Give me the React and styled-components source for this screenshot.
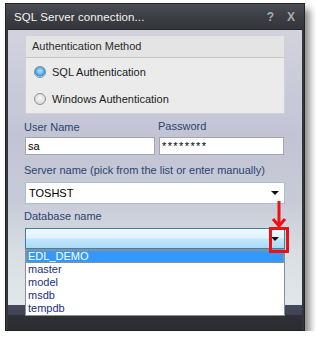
import styled, { createGlobalStyle } from 'styled-components';

const GlobalStyle = createGlobalStyle`
  html, body {
    margin: 0;
    padding: 0;
    background: #ffffff;
  }
  body {
    font-family: "Liberation Sans", Arial, sans-serif;
  }
`;

const Window = styled.div`
  position: relative;
  box-sizing: border-box;
  width: 300px;
  height: 328px;
  margin: 3px 0 0 5px;
  display: flex;
  flex-direction: column;
  background: #34363c;
  border: 1px solid #222327;
  box-shadow: 5px 6px 7px rgba(0, 0, 0, 0.45);
`;

const TitleBar = styled.div`
  height: 25px;
  display: flex;
  align-items: center;
  padding: 0 9px 0 8px;
  background: linear-gradient(180deg, #4a4d53 0%, #3b3e43 50%, #34363b 100%);
`;

const Title = styled.div`
  flex: 1;
  color: #f4f4f4;
  font-size: 11.5px;
  letter-spacing: 0.1px;
`;

const TitleButton = styled.span`
  color: #a9abb0;
  font-size: 12px;
  font-weight: bold;
  margin-left: ${p => p.gap}px;
`;

const Content = styled.div`
  flex: 1;
  margin: 0 2px;
  padding: 5px 17px 0;
  border-top: 1px solid #24262a;
  display: flex;
  flex-direction: column;
  background: linear-gradient(180deg, #d2d3dd 0%, #c6c7d7 30%, #c2c3d4 38%, #c8cbd7 62%, #d9dfe3 82%, #e1e7e9 100%);
`;

const Group = styled.div`
  border: 1px solid #d0d0d6;
  background: #ebebeb;
`;

const GroupHeader = styled.div`
  height: 21px;
  line-height: 21px;
  padding-left: 6px;
  font-size: 11px;
  color: #2c2c2c;
  background: #e4e4e4;
  border-bottom: 1px solid #c6c6c6;
`;

const GroupBody = styled.div`
  display: flex;
  flex-direction: column;
  padding-bottom: 1px;
`;

const RadioRow = styled.label`
  height: 27px;
  display: flex;
  align-items: center;
  padding-left: 8px;
  font-size: 11px;
  color: #1b1b1b;
`;

const RadioDot = styled.span`
  box-sizing: border-box;
  width: 12px;
  height: 12px;
  border-radius: 50%;
  margin-right: 6px;
  border: 1px solid ${p => (p.checked ? '#7d8c9c' : '#8f8f8f')};
  background: ${p =>
    p.checked
      ? 'radial-gradient(circle at 50% 40%, #bfe6ff 0%, #5cb4f2 45%, #2f86d6 70%, #e6eef5 72%, #f4f4f4 100%)'
      : 'radial-gradient(circle at 50% 40%, #f7f7f7 0%, #e2e2e2 55%, #cdcdcd 100%)'};
`;

const FieldGrid = styled.div`
  display: grid;
  grid-template-columns: 130px 125px;
  column-gap: 4px;
  margin-top: 6px;
`;

const Field = styled.div`
  display: flex;
  flex-direction: column;
`;

const Label = styled.div`
  font-size: 11px;
  line-height: 14px;
  color: #2a4570;
  margin-top: ${p => p.mt || 0}px;
  margin-left: -1px;
  position: relative;
  top: ${p => p.lift || 0}px;
`;

const TextBox = styled.div`
  box-sizing: border-box;
  height: 18px;
  margin-top: 3px;
  padding-left: 2px;
  line-height: 16px;
  font-size: 11px;
  color: #000;
  background: #fff;
  border: 1px solid #a3a5ab;
  letter-spacing: ${p => p.spacing || 0}px;
`;

const Combo = styled.div`
  box-sizing: border-box;
  position: relative;
  height: ${p => p.h}px;
  margin-top: 5px;
  display: flex;
  align-items: center;
  padding-left: 3px;
  font-size: 11px;
  color: #000;
  border: 1px solid ${p => (p.open ? '#3c7fb1' : '#a9bdd6')};
  background: ${p =>
    p.open
      ? 'linear-gradient(180deg, #f1f9fe 0%, #e0f3fd 48%, #c2e7fc 52%, #a9daf6 100%)'
      : '#ffffff'};
`;

const ComboText = styled.span`
  flex: 1;
`;

const Caret = styled.span`
  width: 0;
  height: 0;
  margin-right: 5px;
  border-left: 4px solid transparent;
  border-right: 4px solid transparent;
  border-top: 4px solid #111;
`;

const DropList = styled.ul`
  position: absolute;
  left: -1px;
  right: -1px;
  top: calc(100% + 1px);
  margin: 0;
  padding: 0;
  list-style: none;
  background: #fff;
  border: 1px solid #8a8f99;
  z-index: 2;
`;

const DropItem = styled.li`
  box-sizing: border-box;
  height: 13px;
  line-height: 12px;
  padding-left: 2px;
  font-size: 11px;
  color: ${p => (p.active ? '#ffffff' : '#1c2f84')};
  background: ${p => (p.active ? '#3399ff' : 'transparent')};
  outline: ${p => (p.active ? '1px dotted #d9893a' : 'none')};
  outline-offset: -1px;
`;

const Footer = styled.div`
  height: 25px;
  margin: 0 2px;
  background: linear-gradient(180deg, #464a5d 0%, #3f4354 38%, #2f3035 40%, #2b2c30 100%);
`;

const Annotation = styled.svg`
  position: absolute;
  left: 260px;
  top: 193px;
  z-index: 3;
  overflow: visible;
`;

const databases = ['EDL_DEMO', 'master', 'model', 'msdb', 'tempdb'];

export default function App() {
  return (
    <>
      <GlobalStyle />
      <Window>
        <TitleBar>
          <Title>SQL Server connection...</Title>
          <TitleButton gap={0}>?</TitleButton>
          <TitleButton gap={13}>X</TitleButton>
        </TitleBar>
        <Content>
          <Group>
            <GroupHeader>Authentication Method</GroupHeader>
            <GroupBody>
              <RadioRow>
                <RadioDot checked />
                SQL Authentication
              </RadioRow>
              <RadioRow>
                <RadioDot />
                Windows Authentication
              </RadioRow>
            </GroupBody>
          </Group>
          <FieldGrid>
            <Field>
              <Label>User Name</Label>
              <TextBox>sa</TextBox>
            </Field>
            <Field>
              <Label lift={-1}>Password</Label>
              <TextBox spacing={1.4}>********</TextBox>
            </Field>
          </FieldGrid>
          <Label mt={8}>Server name (pick from the list or enter manually)</Label>
          <Combo h={22}>
            <ComboText>TOSHST</ComboText>
            <Caret />
          </Combo>
          <Label mt={5}>Database name</Label>
          <Combo h={21} open>
            <ComboText />
            <Caret />
            <DropList>
              {databases.map((db, i) => (
                <DropItem key={db} active={i === 0}>{db}</DropItem>
              ))}
            </DropList>
          </Combo>
        </Content>
        <Footer />
        <Annotation width="30" height="60" viewBox="0 0 30 60">
          <line x1="13" y1="4" x2="13" y2="28" stroke="#ee1111" strokeWidth="3" />
          <polyline points="7,22 13,29 19,22" fill="none" stroke="#ee1111" strokeWidth="3" />
          <rect x="4.5" y="31.5" width="17" height="23" fill="none" stroke="#ee1111" strokeWidth="3" />
        </Annotation>
      </Window>
    </>
  );
}
